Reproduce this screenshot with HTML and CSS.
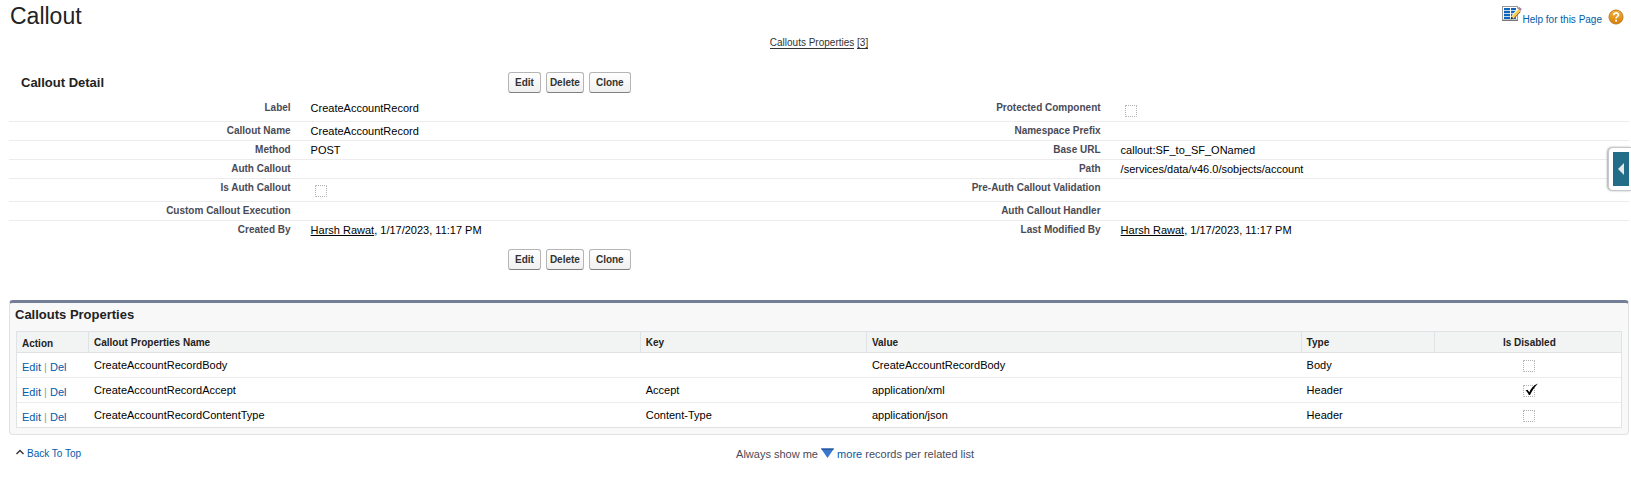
FILE: index.html
```html
<!DOCTYPE html>
<html lang="en">
<head>
<meta charset="utf-8">
<title>Callout</title>
<link rel="stylesheet" href="styles.css">
</head>
<body>
<header class="page-header">
  <h1>Callout</h1>
  <div class="help">
    <a href="#" class="icon-link" aria-label="Customize page">
      <svg width="20" height="16" viewBox="0 0 20 16">
        <rect x="0.500" y="0.500" width="15" height="13.500" fill="#fff" stroke="#999"/>
        <path d="M0 14.500h16" stroke="#777"/>
        <path d="M2 2h6v2.200H2zM9 2h5v2.200H9zM2 5h6v2.200H2zM9 5h5v2.200H9zM2 8h6v2.200H2zM9 8h5v2.200H9zM2 11h6v2H2zM9 11h5v2H9z" fill="#0f66bd"/>
        <path d="M8.500 13.500l1.500-4.500L16 2l3.500 2.500-7 7.500z" fill="#fff"/>
        <path d="M10 11.500l.5-2L16.500 3l2 1.500-6.300 7z" fill="#f6cf4a"/>
        <path d="M12 11.800l6-6.600.7.600-6 6.400z" fill="#8b5a14"/>
        <path d="M15.800 2.500L17 .8 19.800 3l-1.300 2z" fill="#a87fa6"/>
        <path d="M8.500 13.500l1-3 2 2z" fill="#222"/>
      </svg>
    </a>
    <a href="#" class="help-text">Help for this Page</a>
    <a href="#" class="icon-link" aria-label="Help">
      <svg width="16" height="16" viewBox="0 0 16 16">
        <defs><linearGradient id="orange" x1="0" y1="0" x2="0" y2="1"><stop offset="0" stop-color="#f5b13c"/><stop offset="1" stop-color="#d87e06"/></linearGradient></defs>
        <circle cx="8" cy="8" r="7" fill="url(#orange)" stroke="#bf7a1c"/>
        <path d="M5.700 6.300C5.700 3.200 10.400 3.300 10.400 6c0 1.700-2.300 1.700-2.300 3.500" fill="none" stroke="#fff" stroke-width="1.700"/>
        <rect x="7.200" y="10.800" width="1.800" height="1.800" fill="#fff"/>
      </svg>
    </a>
  </div>
</header>

<nav class="jump"><a href="#properties">Callouts Properties</a> <a href="#properties">[3]</a></nav>

<main>
  <section class="detail">
    <div class="detail-bar">
      <h2>Callout Detail</h2>
      <div class="buttons"><button type="button">Edit</button><button type="button" class="delete">Delete</button><button type="button">Clone</button></div>
    </div>
    <table class="fields">
      <tr class="tall"><th scope="row">Label</th><td>CreateAccountRecord</td><th scope="row"><label for="protected">Protected Component</label></th><td><input type="checkbox" id="protected" class="check"></td></tr>
      <tr><th scope="row">Callout Name</th><td>CreateAccountRecord</td><th scope="row">Namespace Prefix</th><td></td></tr>
      <tr><th scope="row">Method</th><td>POST</td><th scope="row">Base URL</th><td>callout:SF_to_SF_ONamed</td></tr>
      <tr><th scope="row">Auth Callout</th><td></td><th scope="row">Path</th><td>/services/data/v46.0/sobjects/account</td></tr>
      <tr class="tall"><th scope="row"><label for="is-auth">Is Auth Callout</label></th><td><input type="checkbox" id="is-auth" class="check"></td><th scope="row">Pre-Auth Callout Validation</th><td></td></tr>
      <tr><th scope="row">Custom Callout Execution</th><td></td><th scope="row">Auth Callout Handler</th><td></td></tr>
      <tr><th scope="row">Created By</th><td><a href="#">Harsh Rawat</a>, 1/17/2023, 11:17 PM</td><th scope="row">Last Modified By</th><td><a href="#">Harsh Rawat</a>, 1/17/2023, 11:17 PM</td></tr>
    </table>
    <div class="detail-bar bottom">
      <div class="buttons"><button type="button">Edit</button><button type="button" class="delete">Delete</button><button type="button">Clone</button></div>
    </div>
  </section>

  <section class="related" id="properties">
    <h2>Callouts Properties</h2>
    <table class="list">
      <colgroup><col class="c-action"><col class="c-name"><col class="c-key"><col class="c-value"><col class="c-type"><col></colgroup>
      <thead>
        <tr><th scope="col" class="action">Action</th><th scope="col">Callout Properties Name</th><th scope="col">Key</th><th scope="col">Value</th><th scope="col">Type</th><th scope="col" class="center">Is Disabled</th></tr>
      </thead>
      <tbody>
        <tr><td class="action"><a href="#">Edit</a> | <a href="#">Del</a></td><td>CreateAccountRecordBody</td><td></td><td>CreateAccountRecordBody</td><td>Body</td><td class="center"><input type="checkbox" class="check" aria-label="Body is disabled"></td></tr>
        <tr><td class="action"><a href="#">Edit</a> | <a href="#">Del</a></td><td>CreateAccountRecordAccept</td><td>Accept</td><td>application/xml</td><td>Header</td><td class="center"><span class="tick"><input type="checkbox" class="check" checked aria-label="Accept is disabled"><svg width="15" height="14" viewBox="0 0 15 14"><path d="M1.500 7.500l2-.7 1.800 2.500C7 5.500 9.500 2.200 14 .5 10.500 4 8 8 6 12H4.800C4 10 3 8.500 1.500 7.500z" fill="#000"/></svg></span></td></tr>
        <tr><td class="action"><a href="#">Edit</a> | <a href="#">Del</a></td><td>CreateAccountRecordContentType</td><td>Content-Type</td><td>application/json</td><td>Header</td><td class="center"><input type="checkbox" class="check" aria-label="Content type is disabled"></td></tr>
      </tbody>
    </table>
  </section>
</main>

<footer class="page-footer">
  <a href="#" class="top-link"><svg width="8" height="6" viewBox="0 0 8 6"><path d="M.5 5L4 1.500 7.500 5" fill="none" stroke="#333" stroke-width="1.400"/></svg>Back To Top</a>
  <p>Always show me <a href="#"><svg width="13" height="10" viewBox="0 0 13 10"><path d="M0 .5h13L6.500 10z" fill="#3a78cf"/><path d="M0 .5h13l-1 1.500H1z" fill="#27579c"/></svg> more</a> records per related list</p>
</footer>

<button type="button" class="side-tab" aria-label="Open sidebar"><span><svg width="8" height="14" viewBox="0 0 8 14"><path d="M7 1v12L1 7z" fill="#e4e8ea"/></svg></span></button>
</body>
</html>
```
FILE: styles.css
```css
* { box-sizing: border-box; }

body {
  margin: 0;
  padding: 0 2px 0 9px;
  background: #fff;
  color: #000;
  font: 11px/14px "Liberation Sans", Arial, sans-serif;
  position: relative;
}

a { color: #015ba7; text-decoration: none; }
h1, h2, p { margin: 0; }
table { width: 100%; border-spacing: 0; table-layout: fixed; }

.page-header { display: flex; justify-content: space-between; height: 36px; }
.page-header h1 { padding-left: 1px; font-size: 23px; line-height: 32px; font-weight: normal; color: #222; }
.help { display: flex; align-items: flex-start; padding: 6px 5px 0 0; }
.icon-link { display: block; height: 16px; }
.help-text { font-size: 10px; line-height: 12px; padding: 8px 6px 0 1px; }
.help .icon-link:last-child { padding-top: 3px; }

.jump { text-align: center; font-size: 10px; line-height: 14px; }
.jump a { display: inline-block; color: #333; border-bottom: 1px solid #333; line-height: 11px; }

.detail-bar { display: flex; padding-top: 22px; height: 49px; }
.detail-bar h2 { width: 499px; padding-left: 12px; font-size: 13px; line-height: 21px; color: #222; }
.buttons { display: flex; gap: 5px; height: 21px; }
.buttons button {
  height: 21px;
  padding: 0 6px;
  border: 1px solid #b5b5b5;
  border-bottom-color: #7f7f7f;
  border-radius: 3px;
  background: linear-gradient(#fff, #f0f0f0);
  color: #333;
  font: bold 10px/18px "Liberation Sans", Arial, sans-serif;
}
.buttons .delete { padding: 0 3px; }
.detail-bar.bottom { padding: 9px 0 0 499px; height: 60px; }

.fields th, .fields td {
  height: 19px;
  padding: 2px 10px 1px;
  border-bottom: 1px solid #ececec;
  vertical-align: top;
  text-align: left;
}
.fields th { width: 18%; color: #4a4a56; font-size: 10px; line-height: 14px; text-align: right; }
.fields td { width: 32%; }
.fields .tall th, .fields .tall td { height: 23px; }
.fields tr:last-child th, .fields tr:last-child td { border-bottom: 0; }
.fields a { color: #000; text-decoration: underline; }
.fields .check { margin: 4px 0 0 4px; }

.check {
  appearance: none;
  display: block;
  width: 12px;
  height: 12px;
  margin: 0;
  border: 1px dotted #b0b0b0;
  border-radius: 1px;
  background: #fff;
}

.related {
  padding: 0 6px 6px;
  border: 1px solid #dfe3e6;
  border-top: 3px solid #747e96;
  border-radius: 4px;
  background: #f8f8f8;
}
.related h2 { height: 28px; font-size: 13px; line-height: 24px; margin-left: -1px; color: #222; }

.list { border: 1px solid #e0e3e5; background: #fff; }
.list th, .list td { padding: 0 2px 0 6px; text-align: left; vertical-align: middle; }
.list th {
  height: 21px;
  padding-left: 5px;
  padding-top: 1px;
  border-bottom: 1px solid #e0e3e5;
  border-left: 1px solid #e0e3e5;
  background: #f2f4f3;
  color: #222;
  font-size: 10px;
}
.list td { height: 25px; border-bottom: 1px solid #ececec; }
.list tbody tr:last-child td { height: 24px; border-bottom: 0; }
.list .action { padding: 3px 0 0 5px; border-left: 0; }
.list td.action { color: #999; }
.list .center { text-align: center; }
.list td.center { padding-top: 2px; }
.list .center .check { display: block; margin: 0 auto; }
.c-action { width: 71px; }
.c-name { width: 34.4%; }
.c-key { width: 14.1%; }
.c-value { width: 27.1%; }
.c-type { width: 8.3%; }

.tick { position: relative; display: block; width: 12px; margin: 0 auto; }
.tick svg { position: absolute; left: 1px; top: -2px; pointer-events: none; }

.page-footer { display: flex; padding: 12px 0 0 7px; }
.top-link { font-size: 10px; line-height: 14px; }
.top-link svg { margin-right: 3px; vertical-align: 2px; }
.page-footer p { flex: 1; text-align: center; color: #4a4a56; line-height: 14px; }

.side-tab {
  position: absolute;
  top: 147px;
  right: 0;
  width: 23px;
  height: 44px;
  padding: 4px 2px 4px 4px;
  border: 1px solid #c4c8ca;
  border-right: 0;
  border-radius: 5px 0 0 5px;
  background: #fff;
  box-shadow: -1px 0 2px #aaa;
}
.side-tab span {
  display: flex;
  align-items: center;
  height: 100%;
  padding-left: 4px;
  background: #236d88;
}
```
